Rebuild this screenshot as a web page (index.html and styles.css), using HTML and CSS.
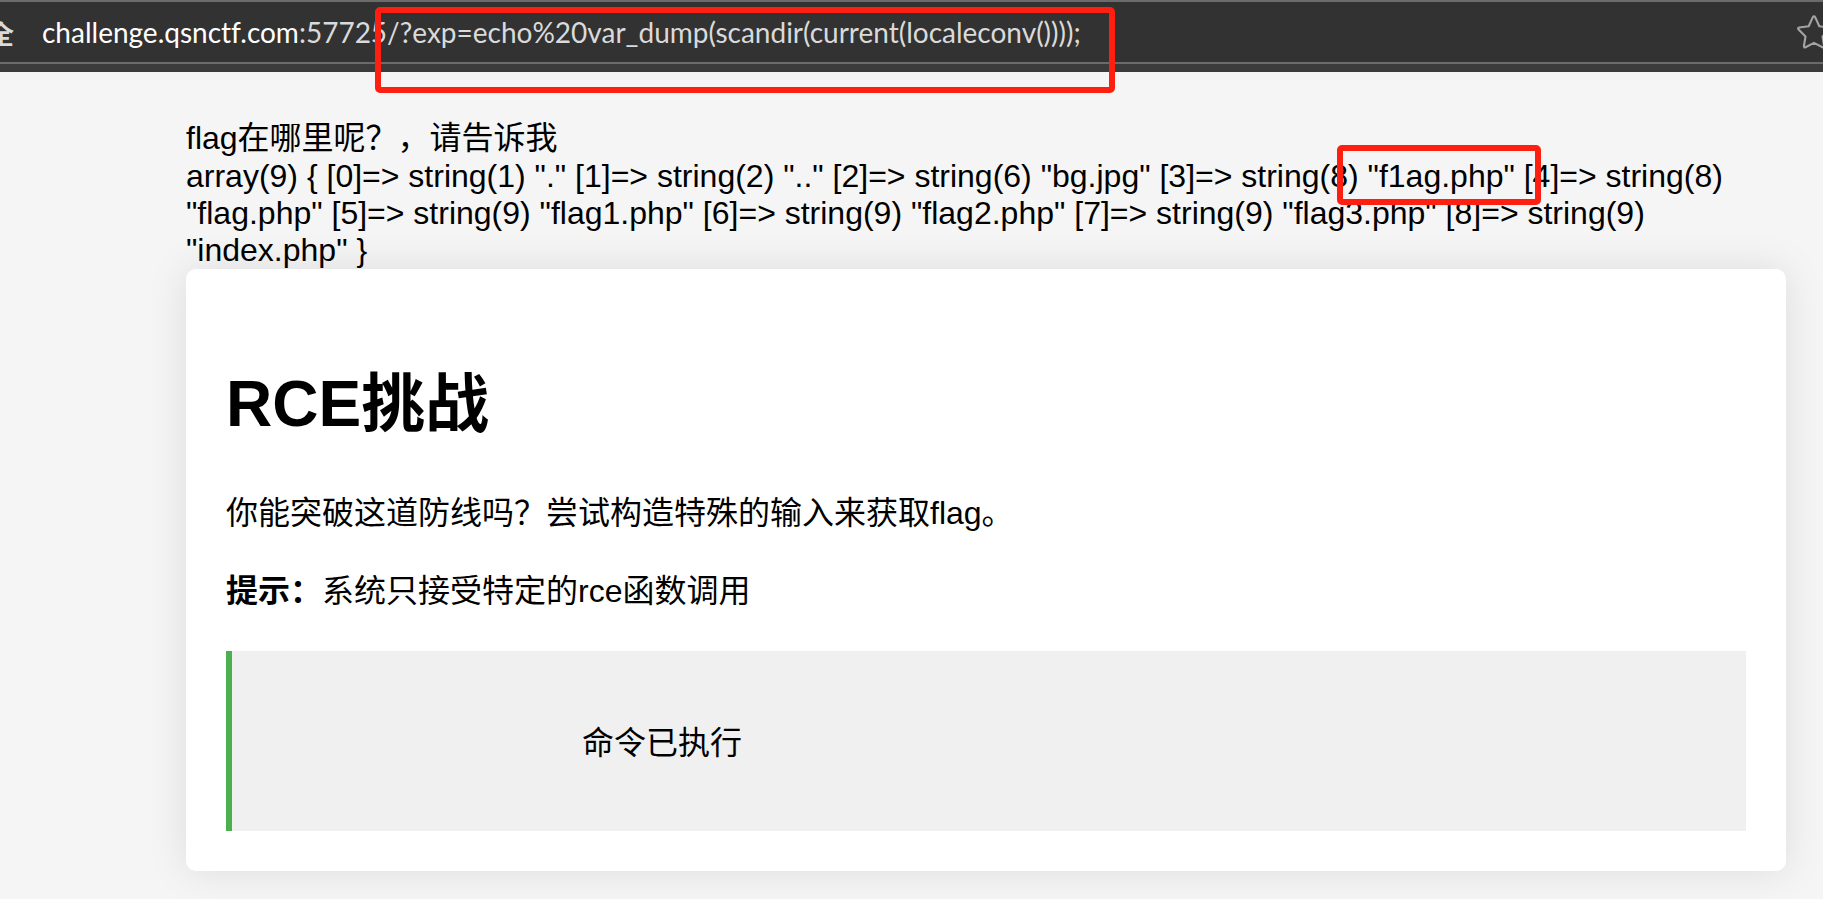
FILE: index.html
```html
<!DOCTYPE html>
<html lang="zh-CN">
<head>
<meta charset="utf-8">
<title>RCE挑战</title>
<link rel="stylesheet" href="styles.css">
</head>
<body>
<header class="toolbar">
  <div class="address-bar">
    <span class="security">全</span>
    <div class="url" role="textbox" aria-label="地址栏" contenteditable="true" spellcheck="false"><span class="url-host">challenge.qsnctf.com</span>:57725/?exp=echo%20var_dump(scandir(current(localeconv())));</div>
    <button class="favorite" type="button" aria-label="收藏">
      <svg class="favorite-icon" viewBox="0 0 32 32" aria-hidden="true"><path d="M14.8 2.2Q16 .4 17.2 2.2L21 10.6L30 11.8Q31.6 12.3 30.5 13.7L24 20.2L25.5 29.2Q25.5 31 24 30.3L16 26.2L8 30.3Q6.5 31 6.5 29.2L8 20.2L1.5 13.7Q.4 12.3 2 11.8L11 10.6Z"/></svg>
    </button>
  </div>
</header>
<div class="mark mark-query"></div>
<div class="mark mark-file"></div>
<main class="page">
  <div class="question">flag在哪里呢？，请告诉我</div>
  <div class="dump">array(9) { [0]=&gt; string(1) "." [1]=&gt; string(2) ".." [2]=&gt; string(6) "bg.jpg" [3]=&gt; string(8) "f1ag.php" [4]=&gt; string(8) "flag.php" [5]=&gt; string(9) "flag1.php" [6]=&gt; string(9) "flag2.php" [7]=&gt; string(9) "flag3.php" [8]=&gt; string(9) "index.php" }</div>
  <section class="card">
    <h1 class="title">RCE挑战</h1>
    <p class="text">你能突破这道防线吗？尝试构造特殊的输入来获取flag。</p>
    <p class="text"><strong>提示：</strong>系统只接受特定的rce函数调用</p>
    <div class="result">命令已执行</div>
  </section>
</main>
</body>
</html>
```
FILE: styles.css
```css
* { box-sizing: border-box; }

body {
  margin: 0;
  min-height: 100vh;
  position: relative;
  overflow-x: hidden;
  background: #f5f5f5;
  color: #000;
  font-family: "Liberation Sans", "Noto Sans CJK SC", sans-serif;
  font-size: 32px;
  line-height: 37px;
}

.toolbar {
  padding-bottom: 8px;
  background: #3b3b3b;
  overflow: hidden;
}

.address-bar {
  display: flex;
  align-items: center;
  height: 64px;
  border-top: 2px solid #6b6b6b;
  border-bottom: 2px solid #6b6b6b;
  background: #323232;
  color: #dadada;
  font-family: Lato, "Noto Sans CJK SC", sans-serif;
  font-size: 28px;
  font-variant-ligatures: none;
}

.security {
  display: flex;
  justify-content: flex-end;
  flex: none;
  width: 14px;
  margin-right: 28px;
  font-family: "Noto Sans CJK SC", sans-serif;
  font-size: 26px;
  font-weight: 700;
}

.url {
  flex: 1;
  white-space: nowrap;
  outline: none;
}

.url-host { color: #fff; }

.favorite {
  display: flex;
  flex: none;
  margin: 0 -8px 0 0;
  padding: 0;
  border: 0;
  background: none;
}

.favorite-icon {
  width: 34px;
  height: 34px;
  fill: none;
  stroke: #a3a3a3;
  stroke-width: 2;
  stroke-linejoin: round;
}

.mark {
  position: absolute;
  z-index: 1;
  border: 6px solid #ff1f10;
  border-radius: 5px;
  pointer-events: none;
}

.mark-query { left: 375px; top: 7px; width: 740px; height: 86px; }
.mark-file { left: 1337px; top: 145px; width: 204px; height: 60px; }

.page { padding: 48px 37px 28px 186px; }

.question {
  margin-bottom: 2px;
  line-height: 36px;
}

.card {
  padding: 40px;
  border-radius: 10px;
  background: #fff;
  box-shadow: 0 0 40px rgba(0, 0, 0, .1);
}

.title {
  margin: 49px 0 40px;
  font-size: 64px;
  line-height: 92px;
}

.text {
  margin: 0 0 32px;
  line-height: 46px;
}

.result {
  margin-top: 37px;
  padding: 69px 40px 65px 350px;
  border-left: 6px solid #4caf50;
  background: #f0f0f0;
  line-height: 46px;
}
```
